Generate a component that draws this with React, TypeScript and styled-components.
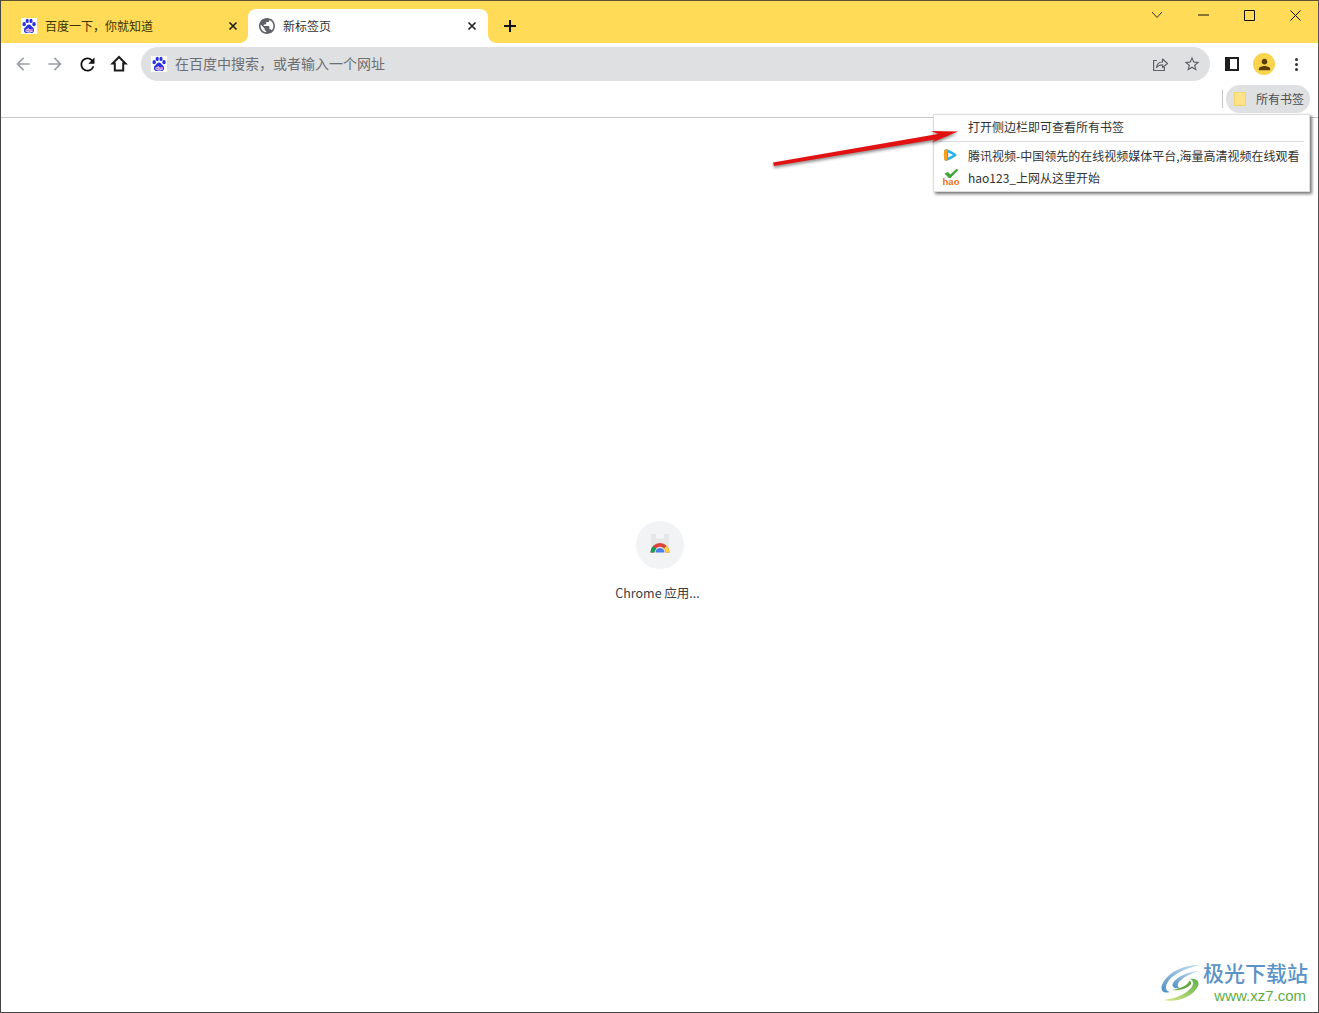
import React from "react";
import styled, { createGlobalStyle } from "styled-components";

const GlobalStyle = createGlobalStyle`
  html, body {
    margin: 0;
    padding: 0;
    background: #fff;
  }
  body {
    font-family: "Noto Sans CJK SC", "Noto Sans", sans-serif;
    overflow: hidden;
  }
`;

const BaiduIcon: React.FC = () => (
  <svg width="16" height="16" viewBox="0 0 16 16">
    <rect width="16" height="16" fill="#fff" />
    <ellipse cx="3.2" cy="6.2" rx="1.7" ry="2.1" fill="#2932e1" />
    <ellipse cx="6.2" cy="2.9" rx="1.6" ry="2.2" fill="#2932e1" />
    <ellipse cx="10" cy="2.9" rx="1.6" ry="2.2" fill="#2932e1" />
    <ellipse cx="13" cy="6.2" rx="1.7" ry="2.1" fill="#2932e1" />
    <path d="M8 6.4c-2 0-2.600 2-4 3.200C2.600 10.800 2.400 15 5.200 15c1.300 0 1.800-.4 2.800-.4s1.500.4 2.800.4c2.800 0 2.600-4.200 1.200-5.400C10.600 8.400 10 6.400 8 6.400z" fill="#2932e1" />
    <text x="8" y="13.600" fontSize="6" fontWeight="700" fill="#fff" textAnchor="middle" fontFamily="Liberation Sans, sans-serif">du</text>
  </svg>
);

const GlobeIcon: React.FC = () => (
  <svg width="16" height="16" viewBox="2 2 20 20">
    <path fill="#5f6368" d="M12 2C6.480 2 2 6.480 2 12s4.480 10 10 10 10-4.480 10-10S17.520 2 12 2zm-1 17.930c-3.950-.490-7-3.850-7-7.930 0-.620.080-1.210.210-1.790L9 15v1c0 1.100.900 2 2 2v1.930zm6.900-2.540c-.260-.810-1-1.390-1.900-1.390h-1v-3c0-.550-.450-1-1-1H8v-2h2c.550 0 1-.450 1-1V7h2c1.100 0 2-.900 2-2v-.410c2.930 1.190 5 4.060 5 7.410 0 2.080-.800 3.970-2.100 5.390z" />
  </svg>
);

const CloseIcon: React.FC = () => (
  <svg width="10" height="10" viewBox="0 0 10 10">
    <path d="M1.500 1.500l7 7M8.500 1.500l-7 7" stroke="#222" strokeWidth="1.700" fill="none" />
  </svg>
);

const NavIcon: React.FC<{ d: string; color: string; size?: number }> = ({ d, color, size = 24 }) => (
  <svg width={size} height={size} viewBox="0 0 24 24">
    <path d={d} fill={color} />
  </svg>
);

const BACK = "M20 11H7.830l5.590-5.590L12 4l-8 8 8 8 1.410-1.410L7.830 13H20v-2z";
const FORWARD = "M4 11h12.170l-5.590-5.590L12 4l8 8-8 8-1.410-1.410L16.170 13H4v-2z";
const RELOAD = "M17.650 6.350A7.958 7.958 0 0 0 12 4c-4.420 0-7.990 3.580-7.990 8s3.570 8 7.990 8c3.730 0 6.840-2.550 7.730-6h-2.080A5.990 5.990 0 0 1 12 18c-3.310 0-6-2.690-6-6s2.690-6 6-6c1.660 0 3.140.690 4.220 1.780L13 11h7V4l-2.350 2.350z";
const STAR = "M22 9.240l-7.190-.620L12 2 9.190 8.630 2 9.240l5.460 4.730L5.820 21 12 17.270 18.180 21l-1.630-7.030L22 9.240zM12 15.400l-3.760 2.270 1-4.280-3.320-2.880 4.380-.380L12 6.100l1.710 4.040 4.380.380-3.320 2.880 1 4.280L12 15.400z";
const PERSON = "M12 12c2.210 0 4-1.790 4-4s-1.790-4-4-4-4 1.790-4 4 1.790 4 4 4zm0 2c-2.670 0-8 1.340-8 4v2h16v-2c0-2.660-5.330-4-8-4z";

const HomeIcon: React.FC = () => (
  <svg width="18" height="18" viewBox="0 0 18 18">
    <path d="M9 2L2.500 8.600h2.300V15.500h8.400V8.600h2.300z" fill="none" stroke="#1c1c1c" strokeWidth="2" />
  </svg>
);

const ShareIcon: React.FC = () => (
  <svg width="16" height="16" viewBox="0 0 16 16" fill="none" stroke="#5f6368" strokeWidth="1.200">
    <path d="M5 4.500H1.600v10h10.800V11" />
    <path d="M4.500 11.500C5 7.800 7.500 6 10.500 6V3l5 4.500-5 4V8.800c-2.500 0-4.500.8-6 2.700z" strokeLinejoin="round" />
  </svg>
);

const TencentIcon: React.FC = () => (
  <svg width="16" height="16" viewBox="0 0 16 16">
    <path d="M4.200 2.200C6 2.200 11 5 13.600 6.700c1 .7 1 1.900 0 2.600C11 11 6 13.800 4.200 13.800 2.600 13.800 2 12.800 1.900 8 2 3.200 2.600 2.200 4.200 2.200z" fill="#25b4ee" />
    <path d="M4.200 2.200C2.600 2.200 2 3.200 1.900 8c.1 4.800.7 5.800 2.300 5.800.4 0 .8-.1 1.300-.3C4.800 10 4.800 6 5.500 2.500c-.5-.2-.9-.3-1.300-.3z" fill="#ff9f1c" />
    <path d="M5.500 13.500c2-.8 5.800-2.900 8.100-4.200.7-.5.900-1.200.7-1.800-2.200 2.300-5.600 4.600-8.800 6z" fill="#5cc63c" />
    <path d="M6.200 5.400L11 8l-4.800 2.600z" fill="#fff" />
  </svg>
);

const HaoIcon: React.FC = () => (
  <svg width="18" height="17" viewBox="0 0 18 17">
    <path d="M2.500 4.500l3.400-1.500 2.300 2.400L14.500 0l2 .8-8 8.200H6.800z" fill="#3fa535" />
    <text x="9" y="16" fontSize="9.500" fontWeight="700" fill="#e8701a" textAnchor="middle" fontFamily="Liberation Sans, sans-serif">hao</text>
  </svg>
);

const ChromeAppIcon: React.FC = () => (
  <svg width="24" height="24" viewBox="0 0 24 24">
    <path d="M3 1h18v18H3z" fill="#e6e7e9" />
    <path d="M8 1h8v3a1.500 1.500 0 0 1-1.500 1.500h-5A1.500 1.500 0 0 1 8 4z" fill="#f6f6f7" />
    <path d="M2.500 19.500a9.500 9.500 0 0 1 19 0h-3.800a5.700 5.700 0 0 0-11.400 0z" fill="#db4437" />
    <path d="M2.500 19.500a9.500 9.500 0 0 1 2.700-6.600l3 3a5.700 5.700 0 0 0-1.900 3.600z" fill="#0f9d58" />
    <path d="M21.500 19.500h-3.800a5.700 5.700 0 0 0-1.700-4l2.700-2.700a9.500 9.500 0 0 1 2.800 6.700z" fill="#fbcf3e" />
    <path d="M7.500 19.500a4.500 4.500 0 0 1 9 0z" fill="#4a80e8" />
  </svg>
);

const WatermarkLogo: React.FC = () => (
  <svg width="43" height="40" viewBox="0 0 43 40">
    <defs>
      <linearGradient id="wmBlue" x1="0" y1="1" x2="1" y2="0">
        <stop offset="0" stopColor="#4d8fc4" />
        <stop offset="1" stopColor="#cfe3f2" />
      </linearGradient>
      <linearGradient id="wmGreen" x1="0" y1="1" x2="1" y2="0">
        <stop offset="0" stopColor="#dbe88a" />
        <stop offset="1" stopColor="#5fb04a" />
      </linearGradient>
    </defs>
    <path d="M41 2C26 1 8 8 2 22c-2 6 2 9 8 7C4 28 5 21 11 15 19 8 30 4 41 2z" fill="url(#wmBlue)" />
    <path d="M39 8C30 8 17 13 13 20c-2 4 2 6 7 5-3-1-3-4 0-7 5-5 12-8 19-10z" fill="url(#wmBlue)" />
    <path d="M3 37c14 3 30-3 35-14 2-5-2-8-8-7 4 2 4 6 0 10-7 7-17 10-27 11z" fill="url(#wmGreen)" />
    <path d="M12 27c8 1 16-2 19-6 1-2 0-3-2-3 0 3-8 8-17 9z" fill="#63a83f" />
  </svg>
);

export default function App() {
  return (
    <>
      <GlobalStyle />
      <Browser>
        <TabStrip>
          <Tabs>
            <Tab>
              <TabIcon><BaiduIcon /></TabIcon>
              <TabTitle>百度一下，你就知道</TabTitle>
              <TabClose><CloseIcon /></TabClose>
            </Tab>
            <Tab $active>
              <TabIcon><GlobeIcon /></TabIcon>
              <TabTitle>新标签页</TabTitle>
              <TabClose><CloseIcon /></TabClose>
            </Tab>
          </Tabs>
          <NewTab>
            <svg width="14" height="14" viewBox="0 0 14 14">
              <path d="M7 1v12M1 7h12" stroke="#111" strokeWidth="2" />
            </svg>
          </NewTab>
          <WindowControls>
            <WindowButton>
              <svg width="12" height="8" viewBox="0 0 12 8" fill="none">
                <path d="M1 1l5 5.500L11 1" stroke="#333" />
              </svg>
            </WindowButton>
            <WindowButton>
              <svg width="11" height="2" viewBox="0 0 11 2">
                <path d="M0 1h11" stroke="#111" />
              </svg>
            </WindowButton>
            <WindowButton>
              <svg width="11" height="11" viewBox="0 0 11 11" fill="none">
                <path d="M.5.500h10v10H.500z" stroke="#111" />
              </svg>
            </WindowButton>
            <WindowButton>
              <svg width="11" height="11" viewBox="0 0 11 11" fill="none">
                <path d="M.5.500l10 10M10.500.500l-10 10" stroke="#111" />
              </svg>
            </WindowButton>
          </WindowControls>
        </TabStrip>

        <Toolbar>
          <ToolButton><NavIcon d={BACK} color="#9aa0a6" size={20} /></ToolButton>
          <ToolButton><NavIcon d={FORWARD} color="#9aa0a6" size={20} /></ToolButton>
          <ToolButton><NavIcon d={RELOAD} color="#111" size={21} /></ToolButton>
          <ToolButton><HomeIcon /></ToolButton>
          <Omnibox>
            <BaiduIcon />
            <OmniboxText>在百度中搜索，或者输入一个网址</OmniboxText>
            <OmniboxActions>
              <ShareIcon />
              <NavIcon d={STAR} color="#5f6368" size={18} />
            </OmniboxActions>
          </Omnibox>
          <RightButtons>
            <ToolButton>
              <SidePanelGlyph />
            </ToolButton>
            <ToolButton>
              <Avatar><NavIcon d={PERSON} color="#5c3d00" size={17} /></Avatar>
            </ToolButton>
            <ToolButton>
              <Dots><i /><i /><i /></Dots>
            </ToolButton>
          </RightButtons>
        </Toolbar>

        <BookmarkBar>
          <BarSeparator />
          <AllBookmarks>
            <FolderGlyph />
            <BookmarkLabel>所有书签</BookmarkLabel>
          </AllBookmarks>
        </BookmarkBar>

        <Content>
          <AppTile>
            <AppCircle><ChromeAppIcon /></AppCircle>
            <AppLabel>Chrome 应用...</AppLabel>
          </AppTile>
        </Content>

        <Popup>
          <PopupHeader>打开侧边栏即可查看所有书签</PopupHeader>
          <PopupDivider />
          <PopupRow>
            <PopupIcon><TencentIcon /></PopupIcon>
            腾讯视频-中国领先的在线视频媒体平台,海量高清视频在线观看
          </PopupRow>
          <PopupRow>
            <PopupIcon><HaoIcon /></PopupIcon>
            hao123_上网从这里开始
          </PopupRow>
        </Popup>

        <Arrow width="200" height="60" viewBox="0 0 200 60">
          <path d="M3 37.500L168 9 161 6l27 .500L162 17.500l3-3L4 41z" fill="#e21212" />
        </Arrow>

        <Watermark>
          <WatermarkLogo />
          <WatermarkText>
            <WatermarkName>极光下载站</WatermarkName>
            <WatermarkUrl>www.xz7.com</WatermarkUrl>
          </WatermarkText>
        </Watermark>
      </Browser>
    </>
  );
}

const Browser = styled.div`
  position: relative;
  box-sizing: border-box;
  width: 1319px;
  height: 1013px;
  display: flex;
  flex-direction: column;
  overflow: hidden;
  background: #fff;
  border-top: 1px solid #5a5230;
  border-left: 1px solid #444;
  border-right: 1px solid #555;
  border-bottom: 1px solid #444;
`;

const TabStrip = styled.div`
  height: 42px;
  flex: none;
  display: flex;
  background: #ffdb58;
`;

const Tabs = styled.div`
  display: flex;
  padding: 8px 0 0 7px;
`;

const Tab = styled.div<{ $active?: boolean }>`
  position: relative;
  box-sizing: border-box;
  height: 34px;
  width: 240px;
  display: flex;
  align-items: center;
  padding: ${(p) => (p.$active ? "0 9px 0 11px" : "0 8px 0 13px")};
  border-radius: 8px 8px 0 0;
  background: ${(p) => (p.$active ? "#fff" : "transparent")};
  color: ${(p) => (p.$active ? "#333" : "#3c3300")};

  ${(p) =>
    p.$active &&
    `
    &::before, &::after {
      content: "";
      position: absolute;
      bottom: 0;
      width: 8px;
      height: 8px;
    }
    &::before {
      left: -8px;
      background: radial-gradient(circle at 0 0, transparent 7.5px, #fff 8px);
    }
    &::after {
      right: -8px;
      background: radial-gradient(circle at 100% 0, transparent 7.5px, #fff 8px);
    }
  `}
`;

const TabIcon = styled.span`
  display: flex;
  flex: none;
  margin-right: 8px;
`;

const TabTitle = styled.span`
  flex: 1;
  font-size: 12px;
  line-height: 16px;
`;

const TabClose = styled.span`
  display: flex;
  flex: none;
  width: 14px;
  justify-content: center;
`;

const NewTab = styled.div`
  width: 14px;
  height: 14px;
  display: flex;
  margin: 18px 0 0 15px;
`;

const WindowControls = styled.div`
  display: flex;
  margin-left: auto;
  height: 28px;
`;

const WindowButton = styled.div`
  width: 46px;
  height: 28px;
  display: flex;
  align-items: center;
  justify-content: center;
`;

const Toolbar = styled.div`
  height: 42px;
  flex: none;
  display: flex;
  align-items: center;
  padding-left: 6px;
  background: #fff;
`;

const ToolButton = styled.div`
  width: 32px;
  height: 32px;
  flex: none;
  display: flex;
  align-items: center;
  justify-content: center;
`;

const Omnibox = styled.div`
  box-sizing: border-box;
  width: 1069px;
  height: 34px;
  margin-left: 6px;
  padding: 0 9px 0 10px;
  display: flex;
  align-items: center;
  border-radius: 17px;
  background: #dfe0e2;
`;

const OmniboxText = styled.span`
  margin: -2px 0 0 8px;
  font-size: 14px;
  color: #6b6e72;
`;

const OmniboxActions = styled.div`
  margin-left: auto;
  display: flex;
  align-items: center;
  gap: 15px;
`;

const RightButtons = styled.div`
  display: flex;
  margin-left: 6px;
`;

const SidePanelGlyph = styled.div`
  box-sizing: border-box;
  width: 14px;
  height: 14px;
  background: #fff;
  border: solid #1f1f1f;
  border-width: 2px 2px 2px 5px;
`;

const Avatar = styled.div`
  width: 22px;
  height: 22px;
  display: flex;
  align-items: center;
  justify-content: center;
  border-radius: 50%;
  background: #fbd44e;
`;

const Dots = styled.div`
  display: flex;
  flex-direction: column;
  gap: 2px;

  i {
    width: 3px;
    height: 3px;
    border-radius: 50%;
    background: #333;
  }
`;

const BookmarkBar = styled.div`
  box-sizing: border-box;
  height: 33px;
  flex: none;
  display: flex;
  justify-content: flex-end;
  padding: 0 8px 4px 0;
  background: #fff;
  border-bottom: 1px solid #c8c8c8;
`;

const BarSeparator = styled.div`
  width: 1px;
  height: 18px;
  margin: 5px 3px 0 0;
  background: #c4c4c4;
`;

const AllBookmarks = styled.div`
  box-sizing: border-box;
  width: 84px;
  height: 28px;
  display: flex;
  align-items: center;
  gap: 10px;
  padding-left: 8px;
  border-radius: 14px;
  background: #dfe0e2;
  font-size: 12px;
  color: #4a4d50;
`;

const BookmarkLabel = styled.span`
  margin-top: -2px;
`;

const FolderGlyph = styled.div`
  box-sizing: border-box;
  width: 12px;
  height: 14px;
  background: #ffe38a;
  border: 1px solid #f6d566;
`;

const Content = styled.div`
  flex: 1;
  min-height: 0;
  display: flex;
  justify-content: center;
  padding: 403px 0 0 0;
`;

const AppTile = styled.div`
  width: 112px;
  display: flex;
  flex-direction: column;
  align-items: center;
`;

const AppCircle = styled.div`
  width: 48px;
  height: 48px;
  display: flex;
  align-items: center;
  justify-content: center;
  border-radius: 50%;
  background: #f1f3f4;
`;

const AppLabel = styled.div`
  margin: 14px 4px 0 0;
  font-size: 12.5px;
  line-height: 20px;
  color: #3c4043;
`;

const Popup = styled.div`
  position: absolute;
  left: 932px;
  top: 113px;
  box-sizing: border-box;
  width: 377px;
  height: 78px;
  background: #fff;
  border: 1px solid #dcdcdc;
  box-shadow: 2px 2px 3px rgba(0, 0, 0, 0.55);
  font-size: 12px;
  color: #333;
`;

const PopupHeader = styled.div`
  height: 26px;
  line-height: 23px;
  padding-left: 34px;
`;

const PopupDivider = styled.div`
  height: 1px;
  margin: 0 5px 2px;
  background: #dcdcdc;
`;

const PopupRow = styled.div`
  height: 22px;
  display: flex;
  align-items: center;
  padding-left: 8px;
  white-space: nowrap;
`;

const PopupIcon = styled.span`
  width: 26px;
  flex: none;
  display: flex;
`;

const Arrow = styled.svg`
  position: absolute;
  left: 769px;
  top: 124px;
  filter: drop-shadow(0 2px 1.5px rgba(0, 0, 0, 0.45));
`;

const Watermark = styled.div`
  position: absolute;
  right: 10px;
  bottom: 8px;
  display: flex;
  align-items: center;
`;

const WatermarkText = styled.div`
  display: flex;
  flex-direction: column;
  align-items: flex-end;
`;

const WatermarkName = styled.div`
  font-size: 21px;
  line-height: 22px;
  font-weight: 500;
  color: #5b93c7;
`;

const WatermarkUrl = styled.div`
  margin: 4px 2px 0 0;
  font-family: "Liberation Sans", sans-serif;
  font-size: 15px;
  line-height: 17px;
  color: #5fae3f;
`;
